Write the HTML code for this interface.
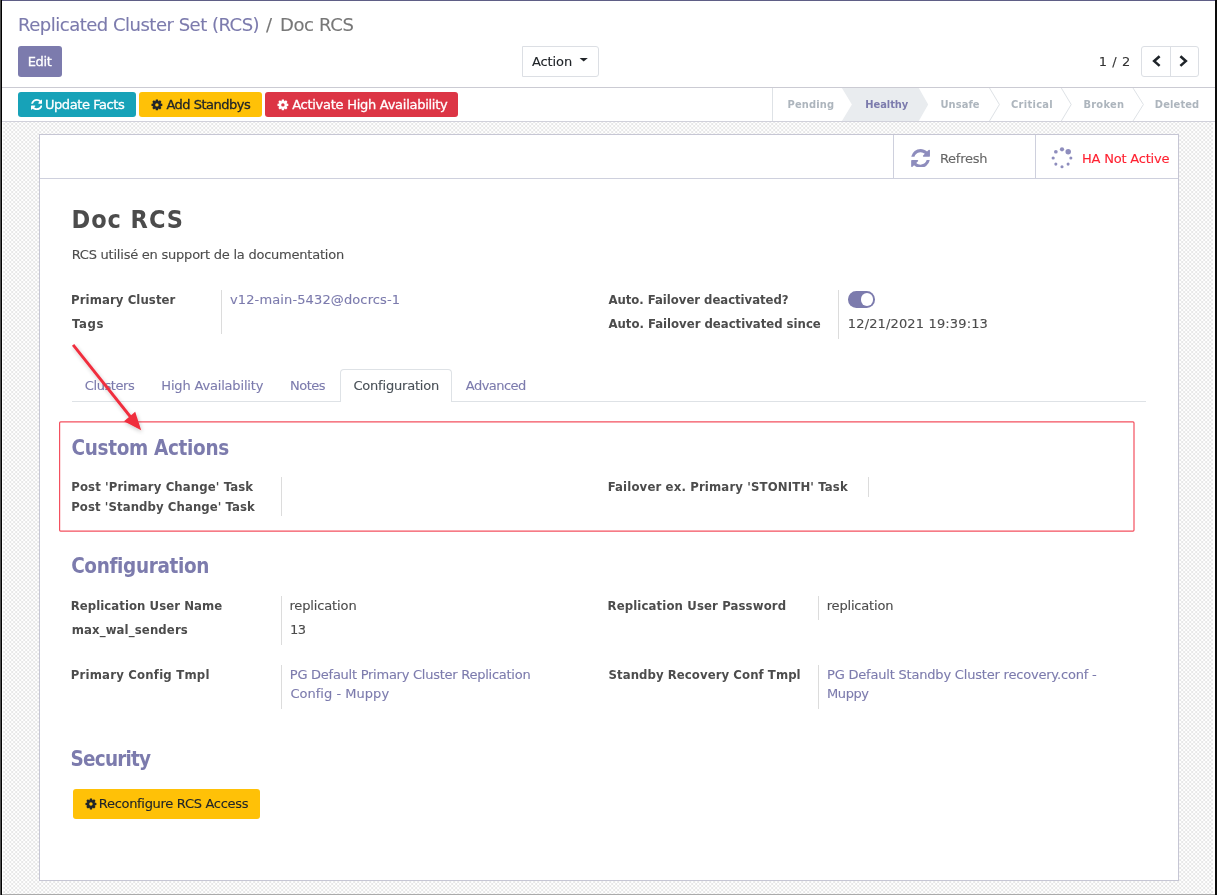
<!DOCTYPE html>
<html lang="en">
<head>
<meta charset="utf-8">
<title>Doc RCS - Replicated Cluster Set (RCS)</title>
<style>
*{box-sizing:border-box;margin:0;padding:0}
html,body{width:1217px;height:895px;overflow:hidden;background:#fff}
body{font-family:"DejaVu Sans","Liberation Sans",sans-serif;font-size:13px;color:#4c4c4c;position:relative}
.abs{position:absolute}
.t{position:absolute;white-space:nowrap;z-index:5}
.btn{position:absolute;border-radius:3px}
.sep{position:absolute;width:1px;background:#dcdcdc}
#cp{position:absolute;left:0;top:0;width:1217px;height:88px;background:#fff;border-bottom:1px solid #cbcbd3}
#sb{position:absolute;left:0;top:88px;width:1217px;height:34px;background:#fff;border-bottom:1px solid #d0d0da}
#bg{position:absolute;left:0;top:122px;width:1217px;height:773px;background:repeating-conic-gradient(#e7e7e7 0% 25%,#fff 0% 50%) 1.2px 1.1px/4px 4px}
#sheet{position:absolute;left:39px;top:134px;width:1140px;height:747px;background:#fff;border:1px solid #c6c6d4}
#bbox{position:absolute;left:40px;top:135px;width:1138px;height:44px;border-bottom:1px solid #ced0dd}
.fr{position:absolute;z-index:50}
</style>
</head>
<body>
<div id="cp"></div>
<div id="sb"></div>
<div id="bg"></div>
<div id="sheet"></div>
<div id="bbox"></div>

<!-- control panel buttons -->
<div class="btn" style="left:18px;top:46.25px;width:44px;height:30.5px;background:#7c7bad"></div>
<div class="btn" style="left:522px;top:46.25px;width:76.6px;height:30.6px;background:#fff;border:1px solid #dcdfe4;border-radius:0 3px 3px 0"></div>
<svg class="abs" style="left:579px;top:57px" width="10" height="6" viewBox="0 0 10 6"><path d="M0.6 0.9 H8.8 L4.7 4.6 Z" fill="#212529"/></svg>
<div class="btn" style="left:1141px;top:46.1px;width:57.6px;height:30.6px;background:#fff;border:1px solid #dcdfe4"></div>
<div class="abs" style="left:1170px;top:47px;width:1px;height:29px;background:#dcdfe4"></div>
<svg class="abs" style="left:1150px;top:54px" width="14" height="14" viewBox="0 0 14 14"><path d="M9.6 2.3 L4.2 7.1 L9.6 11.9" fill="none" stroke="#1f2429" stroke-width="2.6"/></svg>
<svg class="abs" style="left:1177px;top:54px" width="14" height="14" viewBox="0 0 14 14"><path d="M3.4 2.3 L8.8 7.1 L3.4 11.9" fill="none" stroke="#1f2429" stroke-width="2.6"/></svg>

<!-- statusbar buttons -->
<div class="btn" style="left:18px;top:92.1px;width:117.8px;height:24.9px;background:#17a2b8"></div>
<div class="btn" style="left:139px;top:92.1px;width:123px;height:24.9px;background:#ffc107"></div>
<div class="btn" style="left:265px;top:92.1px;width:193px;height:24.9px;background:#dc3545"></div>

<!-- FA icons -->
<svg class="abs" style="left:30.7px;top:99.2px;fill:#fff" width="11.7" height="11.2" preserveAspectRatio="none" viewBox="128 128 1536 1536"><path d="M1639 1056q0 5-1 7-64 268-268 434.500t-478 166.500q-146 0-282.500-55t-243.500-157l-129 129q-19 19-45 19t-45-19-19-45v-448q0-26 19-45t45-19h448q26 0 45 19t19 45-19 45l-137 137q71 66 161 102t187 36q134 0 250-65t186-179q11-17 53-117 8-23 30-23h192q13 0 22.500 9.500t9.500 22.500zm25-800v448q0 26-19 45t-45 19h-448q-26 0-45-19t-19-45 19-45l138-138q-148-137-349-137-134 0-250 65t-186 179q-11 17-53 117-8 23-30 23h-199q-13 0-22.500-9.500t-9.500-22.500v-7q65-268 270-434.500t480-166.500q146 0 284 55.500t245 156.500l130-129q19-19 45-19t45 19 19 45z"/></svg>
<svg class="abs" style="left:151.1px;top:98.8px;fill:#212529" width="11.8" height="11.8" viewBox="-12 -12 24 24"><path fill-rule="evenodd" d="M-3.00 -7.63 L-2.10 -11.00 L2.10 -11.00 L3.00 -7.63 L3.27 -7.52 L6.29 -9.26 L9.26 -6.29 L7.52 -3.27 L7.63 -3.00 L11.00 -2.10 L11.00 2.10 L7.63 3.00 L7.52 3.27 L9.26 6.29 L6.29 9.26 L3.27 7.52 L3.00 7.63 L2.10 11.00 L-2.10 11.00 L-3.00 7.63 L-3.27 7.52 L-6.29 9.26 L-9.26 6.29 L-7.52 3.27 L-7.63 3.00 L-11.00 2.10 L-11.00 -2.10 L-7.63 -3.00 L-7.52 -3.27 L-9.26 -6.29 L-6.29 -9.26 L-3.27 -7.52 Z M0 -3.5 A3.5 3.5 0 1 0 0 3.5 A3.5 3.5 0 1 0 0 -3.5 Z"/></svg>
<svg class="abs" style="left:277.1px;top:98.8px;fill:#fff" width="11.8" height="11.8" viewBox="-12 -12 24 24"><path fill-rule="evenodd" d="M-3.00 -7.63 L-2.10 -11.00 L2.10 -11.00 L3.00 -7.63 L3.27 -7.52 L6.29 -9.26 L9.26 -6.29 L7.52 -3.27 L7.63 -3.00 L11.00 -2.10 L11.00 2.10 L7.63 3.00 L7.52 3.27 L9.26 6.29 L6.29 9.26 L3.27 7.52 L3.00 7.63 L2.10 11.00 L-2.10 11.00 L-3.00 7.63 L-3.27 7.52 L-6.29 9.26 L-9.26 6.29 L-7.52 3.27 L-7.63 3.00 L-11.00 2.10 L-11.00 -2.10 L-7.63 -3.00 L-7.52 -3.27 L-9.26 -6.29 L-6.29 -9.26 L-3.27 -7.52 Z M0 -3.5 A3.5 3.5 0 1 0 0 3.5 A3.5 3.5 0 1 0 0 -3.5 Z"/></svg>

<!-- status arrows -->
<svg class="abs" style="left:760px;top:88px" width="457" height="33" viewBox="760 88 457 33">
<line x1="772.5" y1="88" x2="772.5" y2="121" stroke="#dee2e6" stroke-width="1"/>
<polygon points="841.9,88 918.8,88 928.2,104.5 918.8,121 841.9,121 851.9,104.5" fill="#e9ecef"/>
<polyline points="989.5,88 999.4,104.5 989.5,121" fill="none" stroke="#dee2e6" stroke-width="1"/>
<polyline points="1061.3,88 1071.2,104.5 1061.3,121" fill="none" stroke="#dee2e6" stroke-width="1"/>
<polyline points="1133,88 1143.4,104.5 1133,121" fill="none" stroke="#dee2e6" stroke-width="1"/>
</svg>

<!-- button box -->
<div class="abs" style="left:893px;top:135px;width:1px;height:43px;background:#ced0dd"></div>
<div class="abs" style="left:1035px;top:135px;width:1px;height:43px;background:#ced0dd"></div>
<svg class="abs" style="left:910.6px;top:148.6px;fill:#8e8dbd" width="19.1" height="18.8" viewBox="128 128 1536 1536"><path d="M1639 1056q0 5-1 7-64 268-268 434.500t-478 166.500q-146 0-282.500-55t-243.500-157l-129 129q-19 19-45 19t-45-19-19-45v-448q0-26 19-45t45-19h448q26 0 45 19t19 45-19 45l-137 137q71 66 161 102t187 36q134 0 250-65t186-179q11-17 53-117 8-23 30-23h192q13 0 22.500 9.500t9.500 22.500zm25-800v448q0 26-19 45t-45 19h-448q-26 0-45-19t-19-45 19-45l138-138q-148-137-349-137-134 0-250 65t-186 179q-11 17-53 117-8 23-30 23h-199q-13 0-22.500-9.500t-9.500-22.500v-7q65-268 270-434.500t480-166.500q146 0 284 55.500t245 156.500l130-129q19-19 45-19t45 19 19 45z"/></svg>
<svg class="abs" style="left:1049.45px;top:145.1px;fill:#8e8dbd" width="26" height="26" viewBox="-13 -13 26 26">
<circle cx="0" cy="-8.7" r="2.1"/><circle cx="6.2" cy="-6.25" r="2.75"/><circle cx="8.85" cy="0" r="1.55"/><circle cx="6.1" cy="6.1" r="1.55"/><circle cx="0" cy="8.7" r="1.55"/><circle cx="-6.15" cy="6.1" r="1.55"/><circle cx="-8.85" cy="0" r="1.6"/><circle cx="-6.15" cy="-6.25" r="1.85"/>
</svg>

<!-- toggle -->
<div class="abs" style="left:847.7px;top:291.2px;width:27.8px;height:16.5px;border-radius:8.3px;background:#7c7bad"></div>
<div class="abs" style="left:860.5px;top:293.2px;width:12.5px;height:12.5px;border-radius:50%;background:#fff"></div>

<!-- separators -->
<div class="sep" style="left:221px;top:290px;height:44px"></div>
<div class="sep" style="left:838px;top:290px;height:49px"></div>
<div class="sep" style="left:281px;top:477px;height:39px"></div>
<div class="sep" style="left:868px;top:477px;height:20px"></div>
<div class="sep" style="left:281px;top:596px;height:49px"></div>
<div class="sep" style="left:818px;top:596px;height:24px"></div>
<div class="sep" style="left:281px;top:665px;height:44px"></div>
<div class="sep" style="left:818px;top:665px;height:44px"></div>

<!-- tabs -->
<div class="abs" style="left:72px;top:401px;width:1074px;height:1px;background:#dee2e6"></div>
<div class="abs" style="left:340px;top:369px;width:112px;height:33px;background:#fff;border:1px solid #dee2e6;border-bottom:none;border-radius:4px 4px 0 0"></div>

<!-- reconfigure button -->
<div class="btn" style="left:72.9px;top:788.9px;width:187.1px;height:29.8px;background:#ffc107"></div>
<svg class="abs" style="left:84.8px;top:797.7px;fill:#212529" width="11.9" height="11.9" viewBox="-12 -12 24 24"><path fill-rule="evenodd" d="M-3.00 -7.63 L-2.10 -11.00 L2.10 -11.00 L3.00 -7.63 L3.27 -7.52 L6.29 -9.26 L9.26 -6.29 L7.52 -3.27 L7.63 -3.00 L11.00 -2.10 L11.00 2.10 L7.63 3.00 L7.52 3.27 L9.26 6.29 L6.29 9.26 L3.27 7.52 L3.00 7.63 L2.10 11.00 L-2.10 11.00 L-3.00 7.63 L-3.27 7.52 L-6.29 9.26 L-9.26 6.29 L-7.52 3.27 L-7.63 3.00 L-11.00 2.10 L-11.00 -2.10 L-7.63 -3.00 L-7.52 -3.27 L-9.26 -6.29 L-6.29 -9.26 L-3.27 -7.52 Z M0 -3.5 A3.5 3.5 0 1 0 0 3.5 A3.5 3.5 0 1 0 0 -3.5 Z"/></svg>

<div id="txt" style="position:absolute;left:0;top:0;width:1217px;height:895px;will-change:transform;z-index:5">
<div class="t" style="left:18.00px;top:11.00px;font:400 18px/27px 'DejaVu Sans','Liberation Sans',sans-serif;color:#7c7bad;letter-spacing:-0.493px;-webkit-text-stroke:0.12px #7c7bad;">Replicated Cluster Set (RCS)</div>
<div class="t" style="left:266.00px;top:11.00px;font:400 18px/27px 'DejaVu Sans','Liberation Sans',sans-serif;color:#777;letter-spacing:0.000px;-webkit-text-stroke:0.12px #777;">/</div>
<div class="t" style="left:280.00px;top:11.00px;font:400 18px/27px 'DejaVu Sans','Liberation Sans',sans-serif;color:#777;letter-spacing:-0.378px;-webkit-text-stroke:0.12px #777;">Doc RCS</div>
<div class="t" style="left:27.70px;top:52.00px;font:400 13px/20px 'DejaVu Sans','Liberation Sans',sans-serif;color:#fff;letter-spacing:-0.359px;-webkit-text-stroke:0.3px #fff;">Edit</div>
<div class="t" style="left:531.90px;top:52.00px;font:400 13px/20px 'DejaVu Sans','Liberation Sans',sans-serif;color:#212529;letter-spacing:-0.095px;-webkit-text-stroke:0.12px #212529;">Action</div>
<div class="t" style="left:1098.80px;top:52.00px;font:400 13px/20px 'DejaVu Sans','Liberation Sans',sans-serif;color:#333;letter-spacing:0.571px;-webkit-text-stroke:0.12px #333;">1 / 2</div>
<div class="t" style="left:44.90px;top:95.00px;font:400 13px/20px 'DejaVu Sans','Liberation Sans',sans-serif;color:#fff;letter-spacing:-0.419px;-webkit-text-stroke:0.3px #fff;">Update Facts</div>
<div class="t" style="left:166.40px;top:95.00px;font:400 13px/20px 'DejaVu Sans','Liberation Sans',sans-serif;color:#212529;letter-spacing:-0.496px;-webkit-text-stroke:0.3px #212529;">Add Standbys</div>
<div class="t" style="left:292.20px;top:95.00px;font:400 13px/20px 'DejaVu Sans','Liberation Sans',sans-serif;color:#fff;letter-spacing:-0.271px;-webkit-text-stroke:0.3px #fff;">Activate High Availability</div>
<div class="t" style="left:787.60px;top:97.00px;font:700 11px/16px 'DejaVu Sans Condensed','DejaVu Sans','Liberation Sans',sans-serif;color:#adb5bd;letter-spacing:0.128px;">Pending</div>
<div class="t" style="left:865.30px;top:97.00px;font:700 11px/16px 'DejaVu Sans Condensed','DejaVu Sans','Liberation Sans',sans-serif;color:#7c7bad;letter-spacing:-0.057px;">Healthy</div>
<div class="t" style="left:940.40px;top:97.00px;font:700 11px/16px 'DejaVu Sans Condensed','DejaVu Sans','Liberation Sans',sans-serif;color:#adb5bd;letter-spacing:0.089px;">Unsafe</div>
<div class="t" style="left:1011.00px;top:97.00px;font:700 11px/16px 'DejaVu Sans Condensed','DejaVu Sans','Liberation Sans',sans-serif;color:#adb5bd;letter-spacing:0.301px;">Critical</div>
<div class="t" style="left:1083.40px;top:97.00px;font:700 11px/16px 'DejaVu Sans Condensed','DejaVu Sans','Liberation Sans',sans-serif;color:#adb5bd;letter-spacing:0.276px;">Broken</div>
<div class="t" style="left:1154.80px;top:97.00px;font:700 11px/16px 'DejaVu Sans Condensed','DejaVu Sans','Liberation Sans',sans-serif;color:#adb5bd;letter-spacing:0.137px;">Deleted</div>
<div class="t" style="left:939.90px;top:149.00px;font:400 13px/20px 'DejaVu Sans','Liberation Sans',sans-serif;color:#666;letter-spacing:-0.259px;-webkit-text-stroke:0.12px #666;">Refresh</div>
<div class="t" style="left:1082.00px;top:149.00px;font:400 13px/20px 'DejaVu Sans','Liberation Sans',sans-serif;color:#ff2131;letter-spacing:-0.210px;-webkit-text-stroke:0.12px #ff2131;">HA Not Active</div>
<div class="t" style="left:71.50px;top:201.00px;font:700 25px/38px 'DejaVu Sans Condensed','DejaVu Sans','Liberation Sans',sans-serif;color:#4c4c4c;letter-spacing:0.954px;">Doc RCS</div>
<div class="t" style="left:71.70px;top:245.00px;font:400 13px/20px 'DejaVu Sans','Liberation Sans',sans-serif;color:#4c4c4c;letter-spacing:-0.230px;-webkit-text-stroke:0.12px #4c4c4c;">RCS utilisé en support de la documentation</div>
<div class="t" style="left:71.00px;top:290.00px;font:700 13px/20px 'DejaVu Sans Condensed','DejaVu Sans','Liberation Sans',sans-serif;color:#4c4c4c;letter-spacing:0.094px;">Primary Cluster</div>
<div class="t" style="left:230.00px;top:290.00px;font:400 13px/20px 'DejaVu Sans','Liberation Sans',sans-serif;color:#7c7bad;letter-spacing:0.124px;-webkit-text-stroke:0.12px #7c7bad;">v12-main-5432@docrcs-1</div>
<div class="t" style="left:72.00px;top:314.00px;font:700 13px/20px 'DejaVu Sans Condensed','DejaVu Sans','Liberation Sans',sans-serif;color:#4c4c4c;letter-spacing:0.678px;">Tags</div>
<div class="t" style="left:608.50px;top:290.00px;font:700 13px/20px 'DejaVu Sans Condensed','DejaVu Sans','Liberation Sans',sans-serif;color:#4c4c4c;letter-spacing:-0.036px;">Auto. Failover deactivated?</div>
<div class="t" style="left:608.50px;top:314.00px;font:700 13px/20px 'DejaVu Sans Condensed','DejaVu Sans','Liberation Sans',sans-serif;color:#4c4c4c;letter-spacing:-0.007px;">Auto. Failover deactivated since</div>
<div class="t" style="left:847.80px;top:314.00px;font:400 13px/20px 'DejaVu Sans','Liberation Sans',sans-serif;color:#4c4c4c;letter-spacing:0.146px;-webkit-text-stroke:0.12px #4c4c4c;">12/21/2021 19:39:13</div>
<div class="t" style="left:84.80px;top:376.00px;font:400 13px/20px 'DejaVu Sans','Liberation Sans',sans-serif;color:#7c7bad;letter-spacing:-0.420px;-webkit-text-stroke:0.12px #7c7bad;">Clusters</div>
<div class="t" style="left:161.30px;top:376.00px;font:400 13px/20px 'DejaVu Sans','Liberation Sans',sans-serif;color:#7c7bad;letter-spacing:-0.174px;-webkit-text-stroke:0.12px #7c7bad;">High Availability</div>
<div class="t" style="left:290.00px;top:376.00px;font:400 13px/20px 'DejaVu Sans','Liberation Sans',sans-serif;color:#7c7bad;letter-spacing:-0.493px;-webkit-text-stroke:0.12px #7c7bad;">Notes</div>
<div class="t" style="left:353.40px;top:376.00px;font:400 13px/20px 'DejaVu Sans','Liberation Sans',sans-serif;color:#495057;letter-spacing:-0.194px;-webkit-text-stroke:0.12px #495057;">Configuration</div>
<div class="t" style="left:465.80px;top:376.00px;font:400 13px/20px 'DejaVu Sans','Liberation Sans',sans-serif;color:#7c7bad;letter-spacing:-0.537px;-webkit-text-stroke:0.12px #7c7bad;">Advanced</div>
<div class="t" style="left:71.50px;top:433.00px;font:700 20.5px/31px 'DejaVu Sans Condensed','DejaVu Sans','Liberation Sans',sans-serif;color:#7c7bad;letter-spacing:-0.324px;">Custom Actions</div>
<div class="t" style="left:71.20px;top:477.00px;font:700 13px/20px 'DejaVu Sans Condensed','DejaVu Sans','Liberation Sans',sans-serif;color:#4c4c4c;letter-spacing:0.127px;">Post 'Primary Change' Task</div>
<div class="t" style="left:71.20px;top:497.00px;font:700 13px/20px 'DejaVu Sans Condensed','DejaVu Sans','Liberation Sans',sans-serif;color:#4c4c4c;letter-spacing:0.083px;">Post 'Standby Change' Task</div>
<div class="t" style="left:607.70px;top:477.00px;font:700 13px/20px 'DejaVu Sans Condensed','DejaVu Sans','Liberation Sans',sans-serif;color:#4c4c4c;letter-spacing:0.151px;">Failover ex. Primary 'STONITH' Task</div>
<div class="t" style="left:71.20px;top:551.00px;font:700 20.5px/31px 'DejaVu Sans Condensed','DejaVu Sans','Liberation Sans',sans-serif;color:#7c7bad;letter-spacing:-0.358px;">Configuration</div>
<div class="t" style="left:70.70px;top:596.00px;font:700 13px/20px 'DejaVu Sans Condensed','DejaVu Sans','Liberation Sans',sans-serif;color:#4c4c4c;letter-spacing:0.061px;">Replication User Name</div>
<div class="t" style="left:289.40px;top:596.00px;font:400 13px/20px 'DejaVu Sans','Liberation Sans',sans-serif;color:#4c4c4c;letter-spacing:-0.131px;-webkit-text-stroke:0.12px #4c4c4c;">replication</div>
<div class="t" style="left:71.70px;top:620.00px;font:700 13px/20px 'DejaVu Sans Condensed','DejaVu Sans','Liberation Sans',sans-serif;color:#4c4c4c;letter-spacing:0.128px;">max_wal_senders</div>
<div class="t" style="left:289.90px;top:620.00px;font:400 13px/20px 'DejaVu Sans','Liberation Sans',sans-serif;color:#4c4c4c;letter-spacing:-0.371px;-webkit-text-stroke:0.12px #4c4c4c;">13</div>
<div class="t" style="left:70.70px;top:665.00px;font:700 13px/20px 'DejaVu Sans Condensed','DejaVu Sans','Liberation Sans',sans-serif;color:#4c4c4c;letter-spacing:0.212px;">Primary Config Tmpl</div>
<div class="t" style="left:289.80px;top:665.00px;font:400 13px/20px 'DejaVu Sans','Liberation Sans',sans-serif;color:#7c7bad;letter-spacing:-0.255px;-webkit-text-stroke:0.12px #7c7bad;">PG Default Primary Cluster Replication</div>
<div class="t" style="left:290.40px;top:684.00px;font:400 13px/20px 'DejaVu Sans','Liberation Sans',sans-serif;color:#7c7bad;letter-spacing:0.029px;-webkit-text-stroke:0.12px #7c7bad;">Config - Muppy</div>
<div class="t" style="left:607.50px;top:596.00px;font:700 13px/20px 'DejaVu Sans Condensed','DejaVu Sans','Liberation Sans',sans-serif;color:#4c4c4c;letter-spacing:0.131px;">Replication User Password</div>
<div class="t" style="left:826.70px;top:596.00px;font:400 13px/20px 'DejaVu Sans','Liberation Sans',sans-serif;color:#4c4c4c;letter-spacing:-0.181px;-webkit-text-stroke:0.12px #4c4c4c;">replication</div>
<div class="t" style="left:608.50px;top:665.00px;font:700 13px/20px 'DejaVu Sans Condensed','DejaVu Sans','Liberation Sans',sans-serif;color:#4c4c4c;letter-spacing:0.074px;">Standby Recovery Conf Tmpl</div>
<div class="t" style="left:827.00px;top:665.00px;font:400 13px/20px 'DejaVu Sans','Liberation Sans',sans-serif;color:#7c7bad;letter-spacing:-0.196px;-webkit-text-stroke:0.12px #7c7bad;">PG Default Standby Cluster recovery.conf -</div>
<div class="t" style="left:827.00px;top:684.00px;font:400 13px/20px 'DejaVu Sans','Liberation Sans',sans-serif;color:#7c7bad;letter-spacing:-0.415px;-webkit-text-stroke:0.12px #7c7bad;">Muppy</div>
<div class="t" style="left:70.60px;top:744.00px;font:700 20.5px/31px 'DejaVu Sans Condensed','DejaVu Sans','Liberation Sans',sans-serif;color:#7c7bad;letter-spacing:-0.813px;">Security</div>
<div class="t" style="left:98.80px;top:794.00px;font:400 13px/20px 'DejaVu Sans','Liberation Sans',sans-serif;color:#212529;letter-spacing:-0.302px;-webkit-text-stroke:0.12px #212529;">Reconfigure RCS Access</div>
</div>

<!-- annotation: red box + arrow -->
<svg class="abs" style="left:40px;top:330px;z-index:20" width="1120" height="215" viewBox="40 330 1120 215">
<filter id="sh" x="-20%" y="-20%" width="140%" height="140%"><feGaussianBlur in="SourceAlpha" stdDeviation="2"/><feOffset dx="1" dy="2"/><feComponentTransfer><feFuncA type="linear" slope="0.22"/></feComponentTransfer><feMerge><feMergeNode/><feMergeNode in="SourceGraphic"/></feMerge></filter>
<rect x="59.6" y="421.95" width="1074.4" height="109.1" rx="1" fill="none" stroke="#f4505f" stroke-width="1.2"/>
<g filter="url(#sh)"><line x1="73.1" y1="344.8" x2="131" y2="417.5" stroke="#f02d3e" stroke-width="2.9" stroke-linecap="butt"/>
<polygon points="141.2,430.3 124,421.2 135.2,411.8" fill="#f02d3e"/></g>
</svg>

<!-- window frame -->
<div class="fr" style="left:0;top:0;width:1217px;height:0.6px;background:#5f5e86"></div>
<div class="fr" style="left:0;top:894px;width:1217px;height:1px;background:#a9a9a9"></div>
<div class="fr" style="left:0;top:0;width:2.2px;height:895px;background:linear-gradient(90deg,#505050 0,#505050 0.7px,#000 0.8px)"></div>
<div class="fr" style="left:1213.2px;top:122px;width:2px;height:772px;background:#fff"></div>
<div class="fr" style="left:2.2px;top:122px;width:1px;height:772px;background:#fff"></div>
<div class="fr" style="left:1215.2px;top:0;width:1.8px;height:895px;background:#0c0c0c"></div>
</body>
</html>
